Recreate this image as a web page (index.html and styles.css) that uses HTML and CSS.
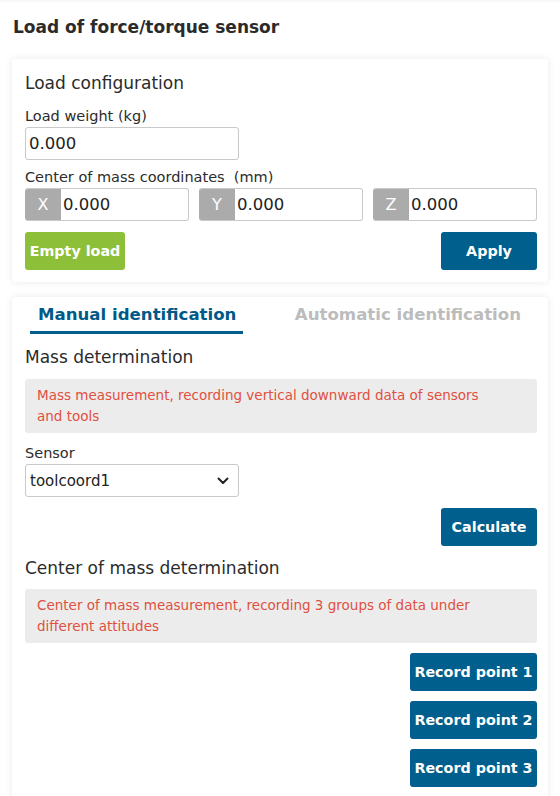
FILE: index.html
```html
<!DOCTYPE html>
<html>
<head>
<meta charset="utf-8">
<link rel="stylesheet" href="styles.css">
</head>
<body>
<div class="page">
  <h1 class="title">Load of force/torque sensor</h1>
  <section class="card card-config">
    <h2 class="section-title">Load configuration</h2>
    <label class="label">Load weight (kg)</label>
    <div class="input half"><span class="value">0.000</span></div>
    <label class="label label-com">Center of mass coordinates&nbsp; (mm)</label>
    <div class="coords">
      <div class="input coord"><span class="prefix">X</span><span class="value">0.000</span></div>
      <div class="input coord"><span class="prefix">Y</span><span class="value">0.000</span></div>
      <div class="input coord"><span class="prefix">Z</span><span class="value">0.000</span></div>
    </div>
    <div class="actions">
      <button class="btn btn-green">Empty load</button>
      <button class="btn btn-blue">Apply</button>
    </div>
  </section>
  <section class="card card-ident">
    <div class="tabs">
      <div class="tab active">Manual identification</div>
      <div class="tab">Automatic identification</div>
    </div>
    <h2 class="section-title">Mass determination</h2>
    <div class="notice notice-mass">Mass measurement, recording vertical downward data of sensors and tools</div>
    <label class="label label-sensor">Sensor</label>
    <div class="input half select"><span class="value">toolcoord1</span>
      <svg class="chev" width="12" height="8" viewBox="0 0 12 8"><path d="M1.5 1.5 L6 6 L10.5 1.5" fill="none" stroke="#222" stroke-width="2" stroke-linecap="round" stroke-linejoin="round"/></svg>
    </div>
    <div class="right"><button class="btn btn-blue">Calculate</button></div>
    <h2 class="section-title title-com">Center of mass determination</h2>
    <div class="notice notice-com">Center of mass measurement, recording 3 groups of data under different attitudes</div>
    <div class="records">
      <button class="btn btn-blue btn-rec">Record point 1</button>
      <button class="btn btn-blue btn-rec">Record point 2</button>
      <button class="btn btn-blue btn-rec">Record point 3</button>
    </div>
  </section>
</div>
</body>
</html>
```
FILE: styles.css
```css
html, body {
  margin: 0;
  padding: 0;
  background: #fff;
  font-family: "DejaVu Sans", Verdana, sans-serif;
  color: #2b2b2b;
  overflow: hidden;
}
.page {
  padding: 0 12px 20px;
  box-shadow: inset 0 3px 3px -2px rgba(0,0,0,0.06);
}
.title {
  margin: 0;
  padding: 17px 1px 0;
  height: 42px;
  font-size: 17px;
  line-height: 20px;
  font-weight: bold;
  color: #2b2b2b;
}
.card {
  background: #fff;
  border-radius: 4px;
  box-shadow: 0 0 8px rgba(0,0,0,0.09);
  padding: 0 11px 0 13px;
}
.card-config {
  margin-bottom: 15px;
  padding-top: 13px;
  padding-bottom: 12px;
}
.section-title {
  margin: 0;
  font-size: 17px;
  font-weight: normal;
  color: #2b2b2b;
  line-height: 22px;
}
.label {
  display: block;
  font-size: 14.5px;
  line-height: 18px;
  margin-top: 13px;
  margin-bottom: 2px;
  color: #2b2b2b;
}
.label-com { margin-top: 8px; margin-bottom: 2px; }
.input {
  box-sizing: border-box;
  height: 33px;
  border: 1px solid #c9c9c9;
  border-radius: 3px;
  display: flex;
  align-items: center;
  font-size: 16.5px;
  color: #222;
  background: #fff;
  overflow: hidden;
}
.input .value { padding-left: 3px; }
.half { width: 214px; }
.coords {
  display: grid;
  grid-template-columns: 164px 164px 164px;
  justify-content: space-between;
}
.coord { border-left: none; }
.prefix {
  background: #ababab;
  color: #fff;
  width: 36px;
  align-self: stretch;
  display: flex;
  align-items: center;
  justify-content: center;
  font-size: 16px;
  margin-top: -1px;
  margin-bottom: -1px;
  border-radius: 3px 0 0 3px;
}
.coord .value { padding-left: 2px; }
.actions {
  display: flex;
  justify-content: space-between;
  margin-top: 11px;
}
.btn {
  border: none;
  border-radius: 3px;
  color: #fff;
  font-family: "DejaVu Sans", Verdana, sans-serif;
  font-weight: bold;
  font-size: 14.3px;
  height: 38px;
  padding: 0;
  cursor: pointer;
}
.btn-green { background: #8dbf38; width: 100px; }
.btn-blue { background: #005f8c; width: 96px; }
.card-ident {
  padding-top: 8px;
  padding-bottom: 10px;
}
.tabs {
  display: flex;
  justify-content: space-between;
  padding: 0 9px 0 5px;
  margin-bottom: 12px;
}
.tab {
  font-size: 16.6px;
  font-weight: bold;
  color: #bcbcbc;
  line-height: 20px;
  padding: 0 7px 6px 8px;
  border-bottom: 3px solid transparent;
}
.tab.active {
  color: #005a87;
  border-bottom-color: #005f8c;
}
.notice {
  background: #ececec;
  border-radius: 3px;
  color: #e0503f;
  font-size: 13.5px;
  line-height: 21px;
  padding: 6px 40px 6px 12px;
}
.notice-mass { margin-top: 11px; }
.notice-com { margin-top: 10px; }
.title-com { margin-top: 0; }
.label-sensor { margin-top: 11px; margin-bottom: 2px; }
.select { justify-content: space-between; height: 33px; font-size: 15px; }
.select .value { padding-left: 4px; }
.chev { margin-right: 9px; }
.right {
  display: flex;
  justify-content: flex-end;
  margin-top: 11px;
  margin-bottom: 11px;
}
.records {
  display: flex;
  flex-direction: column;
  align-items: flex-end;
  gap: 10px;
  margin-top: 10px;
}
.btn-rec { width: 127px; }
```
